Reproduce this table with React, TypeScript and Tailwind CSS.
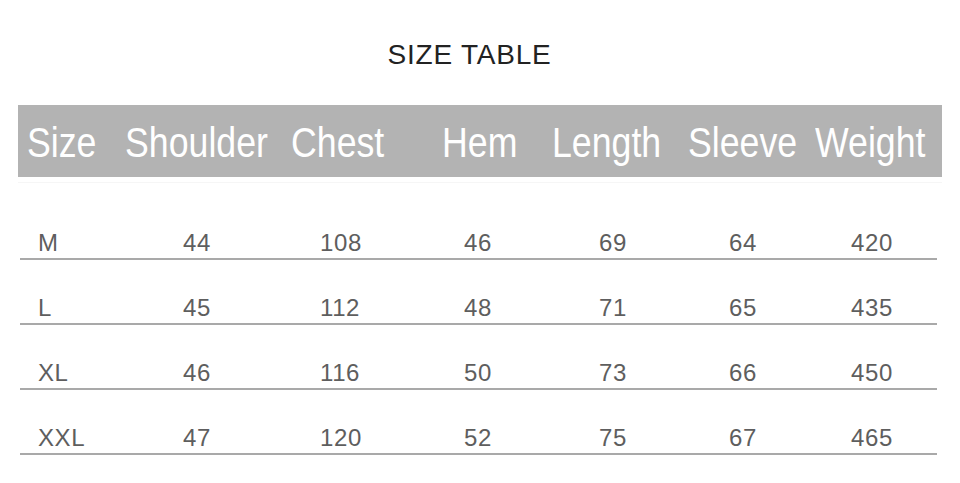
const headers = ['Size', 'Shoulder', 'Chest', 'Hem', 'Length', 'Sleeve', 'Weight'];

const rows = [
  ['M', '44', '108', '46', '69', '64', '420'],
  ['L', '45', '112', '48', '71', '65', '435'],
  ['XL', '46', '116', '50', '73', '66', '450'],
  ['XXL', '47', '120', '52', '75', '67', '465'],
];

export default function App() {
  return (
    <div className="w-[960px] h-[483px] overflow-hidden bg-white font-['Liberation_Sans',Arial,sans-serif]">
      {/* title */}
      <div className="flex justify-center pr-[21px] pt-[41px]">
        <h1 className="text-[28px] leading-none tracking-[0.8px] text-[#222222] font-normal">SIZE TABLE</h1>
      </div>

      {/* header band */}
      <div className="mx-[18px] mt-[36px] h-[72px] bg-[#b3b3b3] pt-[17px] pl-[9px] grid grid-cols-[98px_166px_151px_110px_136px_127px_1fr]">
        {headers.map((h) => (
          <div key={h} className="whitespace-nowrap">
            <span className="inline-block origin-left scale-x-[0.85] text-[42px] leading-none text-white">{h}</span>
          </div>
        ))}
      </div>
      <div className="mx-[18px] h-px bg-[#f6f6f6] mt-[5px]" />

      {/* data rows */}
      <div className="ml-[20px] mr-[23px] mt-[12px]">
        {rows.map((r) => (
          <div
            key={r[0]}
            className="h-[65px] border-b-2 border-[#a9a9a9] pl-[18px] pb-[3px] grid grid-cols-[145px_137px_144px_135px_130px_122px_1fr] items-end"
          >
            {r.map((c, i) => (
              <span key={i} className="text-[24px] leading-none tracking-[0.6px] text-[#5e5e5e]">
                {c}
              </span>
            ))}
          </div>
        ))}
      </div>
    </div>
  );
}
